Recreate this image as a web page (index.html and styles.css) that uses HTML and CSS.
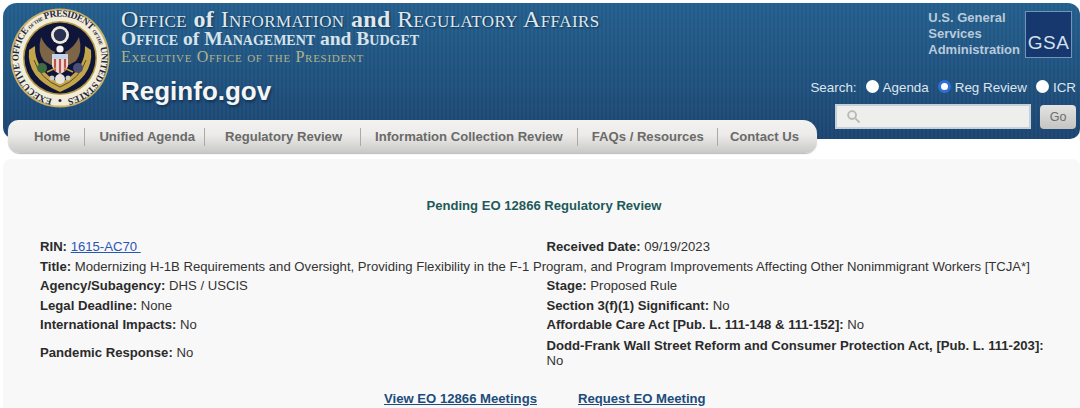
FILE: index.html
```html
<!DOCTYPE html>
<html lang="en">
<head>
    <meta charset="UTF-8">
    <title>Pending EO 12866 Regulatory Review</title>
    <link rel="stylesheet" href="styles.css">
</head>
<body>
    <div class="header">
        <div class="brand">
            <svg class="seal" viewBox="0 0 100 100">
                <defs>
                    <!-- circle starting at the bottom, running clockwise -->
                    <path id="sealRing" d="M50 91.5 a41.5 41.5 0 1 1 0 -83 a41.5 41.5 0 1 1 0 83"></path>
                </defs>
                <circle cx="50" cy="50" r="49.5" fill="#c9b26a"></circle>
                <circle cx="50" cy="50" r="47.5" fill="#f1edd8"></circle>
                <circle cx="50" cy="50" r="37" fill="#b4973f"></circle>
                <circle cx="50" cy="50" r="35.5" fill="#0e1538"></circle>
                <text class="seal-text"><textPath href="#sealRing" startOffset="3%" textLength="245">EXECUTIVE OFFICE <tspan class="seal-small">OF THE</tspan> PRESIDENT <tspan class="seal-small">OF THE</tspan> UNITED STATES</textPath></text>
                <circle cx="50" cy="92.5" r="1.5" fill="#23263f"></circle>
                <!-- scroll -->
                <path d="M19 42 L25 38 Q24 62 50 75 Q76 62 75 38 L81 42 Q84 70 50 84 Q16 70 19 42z" fill="#c2a44a"></path>
                <path d="M24 52 Q30 71 50 79 Q70 71 76 52" fill="none" stroke="#5c4d24" stroke-width="1"></path>
                <!-- crest -->
                <circle cx="50" cy="27" r="9" fill="#ece9dc"></circle>
                <circle cx="50" cy="27" r="6.2" fill="#2a3052"></circle>
                <!-- eagle -->
                <path d="M45 44 Q36 40 31 29 Q27 44 34 53 L43 58z" fill="#7d6647"></path>
                <path d="M55 44 Q64 40 69 29 Q73 44 66 53 L57 58z" fill="#7d6647"></path>
                <path d="M42 46 h16 v12 q-2 6 -8 8 q-6 -2 -8 -8z" fill="#f0dcd6"></path>
                <path d="M45 50 v13 M50 50 v15 M55 50 v13" stroke="#b9544f" stroke-width="2.2"></path>
                <path d="M42 46 h16 v5 h-16z" fill="#c5d3e8"></path>
                <circle cx="50" cy="41" r="3.6" fill="#f4f2ea"></circle>
                <path d="M37 64 L46 60 M63 64 L54 60" stroke="#c2a44a" stroke-width="1.5"></path>
                <circle cx="50" cy="71" r="5" fill="#e6e4dc"></circle>
                <circle cx="42" cy="70" r="2.5" fill="#cfcdc4"></circle>
                <circle cx="58" cy="70" r="2.5" fill="#cfcdc4"></circle>
                <circle cx="32" cy="60" r="5" fill="#3f6b40"></circle>
                <circle cx="68" cy="60" r="5" fill="#4b4f75"></circle>
            </svg>
            <div class="titles">
                <div class="title-main">Office <span class="lc">of</span> Information <span class="lc">and</span> Regulatory Affairs</div>
                <div class="title-sub">Office <span class="lc">of</span> Management <span class="lc">and</span> Budget</div>
                <div class="title-exec">Executive Office of the President</div>
                <div class="site-name">Reginfo.gov</div>
            </div>
        </div>
        <div class="header-right">
            <div class="gsa">
                <div class="gsa-name">U.S. General<br>Services<br>Administration</div>
                <div class="gsa-logo">GSA</div>
            </div>
            <div class="search-options">
                <span>Search:</span>
                <label><span class="radio"></span>Agenda</label>
                <label><span class="radio checked"></span>Reg Review</label>
                <label><span class="radio"></span>ICR</label>
            </div>
            <div class="search-box">
                <div class="search-input">
                    <svg class="search-icon" viewBox="0 0 16 16">
                        <circle cx="6.5" cy="6.5" r="4.2"></circle>
                        <path d="M10 10 L14.5 14.5"></path>
                    </svg>
                </div>
                <div class="go">Go</div>
            </div>
        </div>
    </div>

    <div class="nav">
        <a href="#">Home</a>
        <a href="#" class="nav-agenda">Unified Agenda</a>
        <a href="#" class="nav-review">Regulatory Review</a>
        <a href="#">Information Collection Review</a>
        <a href="#" class="nav-faq">FAQs / Resources</a>
        <a href="#" class="nav-contact">Contact Us</a>
    </div>

    <div class="content">
        <h1>Pending EO 12866 Regulatory Review</h1>
        <div class="details">
            <div><b>RIN:</b> <a href="#">1615-AC70&nbsp;</a></div>
            <div><b>Received Date:</b> 09/19/2023</div>
            <div class="wide"><b>Title:</b> Modernizing H-1B Requirements and Oversight, Providing Flexibility in the F-1 Program, and Program Improvements Affecting Other Nonimmigrant Workers [TCJA*]</div>
            <div><b>Agency/Subagency:</b> DHS / USCIS</div>
            <div><b>Stage:</b> Proposed Rule</div>
            <div><b>Legal Deadline:</b> None</div>
            <div><b>Section 3(f)(1) Significant:</b> No</div>
            <div><b>International Impacts:</b> No</div>
            <div><b>Affordable Care Act [Pub. L. 111-148 &amp; 111-152]:</b> No</div>
            <div class="pandemic"><b>Pandemic Response:</b> No</div>
            <div class="tall"><b>Dodd-Frank Wall Street Reform and Consumer Protection Act, [Pub. L. 111-203]:</b> No</div>
        </div>
        <div class="links">
            <a href="#">View EO 12866 Meetings</a>
            <a href="#">Request EO Meeting</a>
        </div>
    </div>
</body>
</html>
```
FILE: styles.css
```css
* {
    box-sizing: border-box;
}

html, body {
    height: 408px;
    overflow: hidden;
}

body {
    margin: 0;
    background: #ffffff;
    font-family: "Liberation Sans", Arial, sans-serif;
    color: #222;
}

/* Banner */
.header {
    display: flex;
    justify-content: space-between;
    height: 136px;
    margin: 3px 0 0 3px;
    padding: 5px 4px 0 7px;
    border-radius: 14px 12px 10px 12px;
    background: repeating-linear-gradient(90deg, rgba(255, 255, 255, 0.025) 0 2px, rgba(0, 0, 0, 0.025) 2px 4px), linear-gradient(#245f8d, #20517e 60%, #1c4672);
}

.brand {
    display: flex;
    gap: 11px;
}

.seal {
    width: 100px;
    height: 100px;
    flex: none;
}

.seal-text {
    font: bold 9.4px "Liberation Serif", serif;
    fill: #23263f;
}

.seal-small {
    font-size: 5px;
}

.titles {
    font-family: "Liberation Serif", serif;
    font-variant: small-caps;
}

.title-main {
    font-size: 24px;
    line-height: 22px;
    letter-spacing: 0.4px;
    color: #dfe8ee;
    text-shadow: 1px 1px 2px #12304f;
    white-space: nowrap;
}

.title-sub {
    font-size: 19.5px;
    font-weight: bold;
    line-height: 18px;
    color: #d9e3ea;
}

.title-exec {
    font-size: 16px;
    line-height: 17px;
    letter-spacing: 0.7px;
    color: #b3b48a;
}

.lc {
    font-variant: normal;
    font-weight: bold;
}

.site-name {
    margin-top: 10px;
    font: bold 26px/32px "Liberation Sans", Arial, sans-serif;
    letter-spacing: 0;
    color: #f4f6f6;
    text-shadow: 1px 2px 3px #12304f;
}

.header-right {
    display: flex;
    flex-direction: column;
    align-items: flex-end;
}

.gsa {
    display: flex;
    align-items: center;
    gap: 5px;
    margin: 2px 4px 0 0;
}

.gsa-name {
    font-size: 13px;
    font-weight: bold;
    line-height: 16px;
    color: #b9cbdb;
}

.gsa-logo {
    width: 47px;
    height: 47px;
    padding-top: 19px;
    border: 1px solid #6f97bb;
    background: #16386f;
    color: #d5e1ea;
    font-size: 19px;
    line-height: 24px;
    letter-spacing: 0.5px;
    text-align: center;
}

.search-options {
    display: flex;
    align-items: center;
    margin-top: 20px;
    font-size: 13.4px;
    line-height: 20px;
    color: #dde6ee;
}

.search-options label {
    display: flex;
    align-items: center;
    margin-left: 9px;
}

.radio {
    width: 13px;
    height: 13px;
    margin: -3px 4px 0 0;
    border-radius: 50%;
    background: #fff;
}

.radio.checked {
    border: 3px solid #2f6fd8;
}

.search-box {
    display: flex;
    align-items: center;
    gap: 9px;
    margin-top: 6px;
}

.search-input {
    width: 196px;
    height: 25px;
    padding: 3px 0 0 9px;
    border: 2px solid #c5d0d8;
    background: #eeeeec;
}

.search-icon {
    width: 15px;
    height: 15px;
    fill: none;
    stroke: #b9b9b5;
    stroke-width: 2;
}

.go {
    width: 36px;
    height: 24px;
    border-radius: 4px;
    background: linear-gradient(#e4e4e2, #c4c4c2);
    color: #6d6d6b;
    font-size: 12.5px;
    line-height: 24px;
    text-align: center;
}

/* Tabs bar, sits over the bottom of the banner */
.nav {
    position: absolute;
    top: 120px;
    left: 8px;
    display: flex;
    align-items: center;
    height: 33px;
    padding-left: 12px;
    border-radius: 10px 14px 12px 12px;
    background: linear-gradient(#f3f3f1, #ecebe9 45%, #c9c9c7);
    box-shadow: 0 1px 1px #bbb;
}

.nav a {
    padding: 0 14px;
    border-right: 1px solid #aaa;
    font-size: 13.1px;
    font-weight: bold;
    line-height: 18px;
    color: #6a6a68;
    text-decoration: none;
    white-space: nowrap;
}

.nav .nav-agenda {
    padding-right: 9px;
}

.nav .nav-review {
    padding: 0 18px 0 20px;
}

.nav .nav-faq {
    padding-right: 13px;
}

.nav .nav-contact {
    padding: 0 18px 0 12px;
    border-right: 0;
}

/* Main panel */
.content {
    height: 249px;
    margin: 20px 0 0 3px;
    border-radius: 8px 8px 0 0;
    background: #f8f8f8;
    padding: 39px 32px 0 37px;
    font-size: 13.14px;
}

h1 {
    margin: 0 0 23px;
    font-size: 13.1px;
    line-height: 16px;
    text-align: center;
    color: #1e5a5a;
}

.details {
    display: grid;
    grid-template-columns: 506.5px 1fr;
    align-items: center;
    line-height: 19.6px;
    color: #333;
}

.details b {
    color: #2b2b2b;
}

.details .wide {
    grid-column: 1 / 3;
}

.details .tall {
    line-height: 15px;
    padding-top: 3px;
}

.details .pandemic {
    padding-top: 3px;
}

.details a {
    color: #2a55b5;
}

.links {
    display: flex;
    gap: 41px;
    margin: 23px 0 0 344px;
    font-weight: bold;
}

.links a {
    color: #1c4c7c;
}
```
